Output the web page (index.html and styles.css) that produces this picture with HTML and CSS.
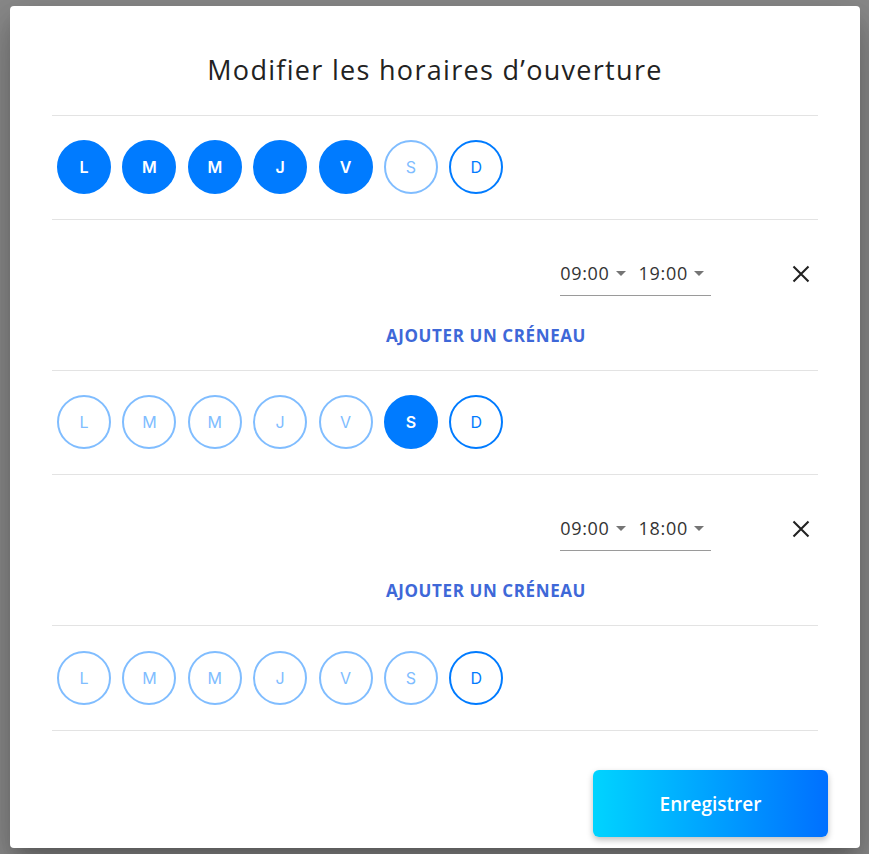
FILE: index.html
```html
<!DOCTYPE html>
<html lang="fr">
<head>
  <meta charset="UTF-8">
  <meta name="viewport" content="width=device-width, initial-scale=1.0">
  <title>Modifier les horaires d'ouverture</title>
  <link rel="stylesheet" href="styles.css">
</head>
<body>
  <div class="dialog">
    <div class="dialog-header">
      <h2>Modifier les horaires d’ouverture</h2>
    </div>

    <div class="days">
      <span class="day on">L</span>
      <span class="day on">M</span>
      <span class="day on">M</span>
      <span class="day on">J</span>
      <span class="day on">V</span>
      <span class="day">S</span>
      <span class="day free">D</span>
    </div>

    <div class="slots">
      <div class="slot-row">
        <div class="time-field">
          <span class="time-select">09:00<i class="caret"></i></span>
          <span class="time-select">19:00<i class="caret"></i></span>
        </div>
        <button class="remove" aria-label="Supprimer">
          <svg width="18" height="18" viewBox="0 0 18 18"><path d="M1.5 1.5L16.5 16.5M16.5 1.5L1.5 16.5" stroke="#222" stroke-width="2.1" fill="none"/></svg>
        </button>
      </div>
      <div class="add-row">
        <button class="add">Ajouter un créneau</button>
      </div>
    </div>

    <div class="days">
      <span class="day">L</span>
      <span class="day">M</span>
      <span class="day">M</span>
      <span class="day">J</span>
      <span class="day">V</span>
      <span class="day on">S</span>
      <span class="day free">D</span>
    </div>

    <div class="slots">
      <div class="slot-row">
        <div class="time-field">
          <span class="time-select">09:00<i class="caret"></i></span>
          <span class="time-select">18:00<i class="caret"></i></span>
        </div>
        <button class="remove" aria-label="Supprimer">
          <svg width="18" height="18" viewBox="0 0 18 18"><path d="M1.5 1.5L16.5 16.5M16.5 1.5L1.5 16.5" stroke="#222" stroke-width="2.1" fill="none"/></svg>
        </button>
      </div>
      <div class="add-row">
        <button class="add">Ajouter un créneau</button>
      </div>
    </div>

    <div class="days last">
      <span class="day">L</span>
      <span class="day">M</span>
      <span class="day">M</span>
      <span class="day">J</span>
      <span class="day">V</span>
      <span class="day">S</span>
      <span class="day free">D</span>
    </div>

    <div class="dialog-footer">
      <button class="save">Enregistrer</button>
    </div>
  </div>
</body>
</html>
```

FILE: styles.css
```css
* {
  box-sizing: border-box;
}
body {
  margin: 0;
  height: 854px;
  overflow: hidden;
  background: #8a8a8a;
  font-family: 'Open Sans', sans-serif;
  color: #222;
}
.dialog {
  margin: 6px 9px 0 10px;
  height: 842px;
  background: #fff;
  border-radius: 4px;
  box-shadow: 0 11px 15px -7px rgba(0,0,0,0.2), 0 24px 38px 3px rgba(0,0,0,0.14), 0 9px 46px 8px rgba(0,0,0,0.12);
}
.dialog-header {
  margin: 0 42px;
  padding: 48px 0 29px;
  border-bottom: 1px solid #e3e3e3;
}
h2 {
  margin: 0;
  text-align: center;
  font-size: 27px;
  line-height: 32px;
  font-weight: 400;
  letter-spacing: 1.3px;
  color: #222;
}
.days {
  margin: 0 42px;
  padding: 24px 0 25px 5px;
  display: flex;
  gap: 11.4px;
  border-bottom: 1px solid #e3e3e3;
}
.days.last {
  padding-top: 25px;
}
.day {
  width: 54px;
  height: 54px;
  border-radius: 50%;
  border: 2px solid #80bdff;
  color: #80bdff;
  font-family: Inter, sans-serif;
  font-size: 16px;
  display: flex;
  align-items: center;
  justify-content: center;
}
.day.on {
  background: #007bff;
  border-color: #007bff;
  color: #fff;
  font-weight: 600;
}
.day.free {
  border-color: #007bff;
  color: #007bff;
}
.slots {
  margin: 0 42px;
  padding: 43px 0 17px;
  border-bottom: 1px solid #e3e3e3;
}
.slot-row {
  display: flex;
  justify-content: flex-end;
  align-items: flex-start;
}
.time-field {
  display: flex;
  gap: 13px;
  height: 33px;
  padding: 0 7px 0 0;
  border-bottom: 1px solid #9a9a9a;
  align-items: flex-start;
  font-size: 18px;
  line-height: 20px;
  letter-spacing: 0.7px;
  color: #333;
}
.time-select {
  display: inline-flex;
  align-items: center;
  gap: 6px;
}
.caret {
  width: 0;
  height: 0;
  border-left: 5px solid transparent;
  border-right: 5px solid transparent;
  border-top: 5px solid #757575;
}
.remove {
  width: 34px;
  height: 22px;
  margin-left: 73px;
  padding: 0;
  border: 0;
  background: none;
  display: flex;
  align-items: center;
  justify-content: center;
}
.add-row {
  margin-top: 21px;
  padding-left: 102px;
  display: flex;
  justify-content: center;
}
.add {
  height: 36px;
  border: 0;
  background: none;
  padding: 0 8px;
  font-family: 'Open Sans', sans-serif;
  font-size: 17px;
  font-weight: 700;
  letter-spacing: 0.6px;
  text-transform: uppercase;
  color: #3e68d8;
}
.dialog-footer {
  padding: 39px 32px 10px;
  display: flex;
  justify-content: flex-end;
}
.save {
  width: 235px;
  height: 67px;
  border: 0;
  border-radius: 6px;
  background: linear-gradient(90deg, #00d4ff, #0070ff);
  box-shadow: 0 3px 6px rgba(0,0,0,0.25);
  color: #fff;
  font-family: 'Open Sans', sans-serif;
  font-size: 19px;
  font-weight: 600;
}
```
